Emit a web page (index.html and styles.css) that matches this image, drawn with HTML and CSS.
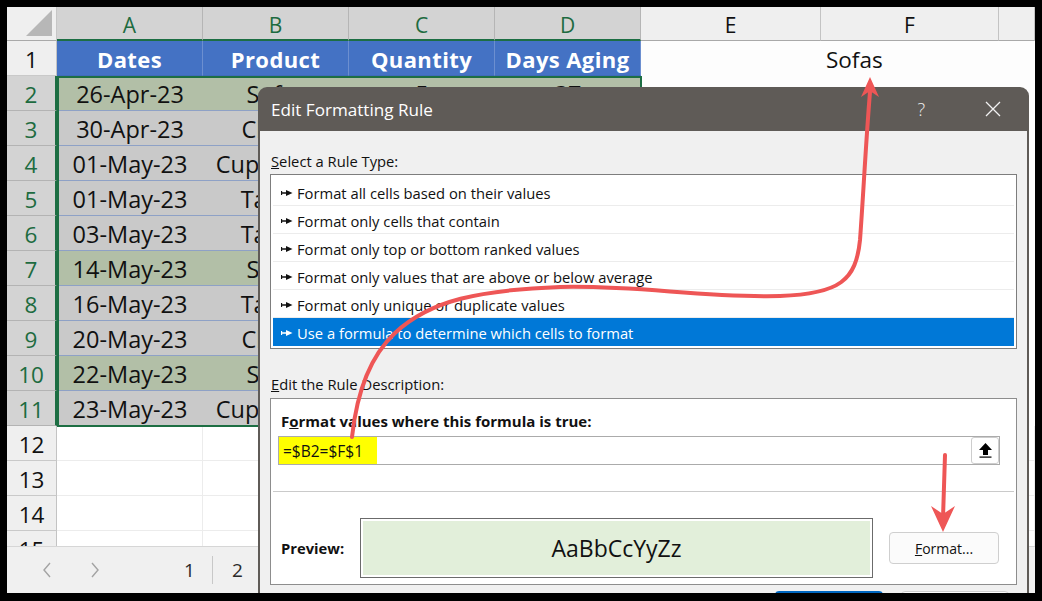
FILE: index.html
```html
<!DOCTYPE html>
<html lang="en">
<head>
    <meta charset="UTF-8">
    <title>Edit Formatting Rule</title>
    <link rel="stylesheet" href="styles.css">
</head>
<body>

    <div class="frame">
        <!-- Worksheet -->
        <div class="grid">
            <div class="corner"><span class="tri"></span></div>
            <div class="colhdr sel">A</div>
            <div class="colhdr sel">B</div>
            <div class="colhdr sel">C</div>
            <div class="colhdr sel">D</div>
            <div class="colhdr">E</div>
            <div class="colhdr">F</div>
            <div class="colhdr"></div>

            <div class="rowhdr top">1</div>
            <div class="cell head">Dates</div>
            <div class="cell head">Product</div>
            <div class="cell head">Quantity</div>
            <div class="cell head">Days Aging</div>
            <div class="cell blank"></div>
            <div class="cell blank left">Sofas</div>
            <div class="cell blank"></div>

            <div class="rowhdr sel">2</div>
            <div class="cell g">26-Apr-23</div><div class="cell g">Sofas</div><div class="cell g">5</div><div class="cell g">37</div>
            <div class="cell blank"></div><div class="cell blank"></div><div class="cell blank"></div>

            <div class="rowhdr sel">3</div>
            <div class="cell s">30-Apr-23</div><div class="cell s">Chairs</div><div class="cell s">8</div><div class="cell s">33</div>
            <div class="cell blank"></div><div class="cell blank"></div><div class="cell blank"></div>

            <div class="rowhdr sel">4</div>
            <div class="cell s">01-May-23</div><div class="cell s">Cupboards</div><div class="cell s">3</div><div class="cell s">32</div>
            <div class="cell blank"></div><div class="cell blank"></div><div class="cell blank"></div>

            <div class="rowhdr sel">5</div>
            <div class="cell s">01-May-23</div><div class="cell s">Tables</div><div class="cell s">6</div><div class="cell s">32</div>
            <div class="cell blank"></div><div class="cell blank"></div><div class="cell blank"></div>

            <div class="rowhdr sel">6</div>
            <div class="cell s">03-May-23</div><div class="cell s">Tables</div><div class="cell s">4</div><div class="cell s">30</div>
            <div class="cell blank"></div><div class="cell blank"></div><div class="cell blank"></div>

            <div class="rowhdr sel">7</div>
            <div class="cell g">14-May-23</div><div class="cell g">Sofas</div><div class="cell g">2</div><div class="cell g">19</div>
            <div class="cell blank"></div><div class="cell blank"></div><div class="cell blank"></div>

            <div class="rowhdr sel">8</div>
            <div class="cell s">16-May-23</div><div class="cell s">Tables</div><div class="cell s">7</div><div class="cell s">17</div>
            <div class="cell blank"></div><div class="cell blank"></div><div class="cell blank"></div>

            <div class="rowhdr sel">9</div>
            <div class="cell s">20-May-23</div><div class="cell s">Chairs</div><div class="cell s">9</div><div class="cell s">13</div>
            <div class="cell blank"></div><div class="cell blank"></div><div class="cell blank"></div>

            <div class="rowhdr sel">10</div>
            <div class="cell g">22-May-23</div><div class="cell g">Sofas</div><div class="cell g">4</div><div class="cell g">11</div>
            <div class="cell blank"></div><div class="cell blank"></div><div class="cell blank"></div>

            <div class="rowhdr sel">11</div>
            <div class="cell s">23-May-23</div><div class="cell s">Cupboards</div><div class="cell s">5</div><div class="cell s">10</div>
            <div class="cell blank"></div><div class="cell blank"></div><div class="cell blank"></div>

            <div class="rowhdr">12</div>
            <div class="cell e"></div><div class="cell e"></div><div class="cell e"></div><div class="cell e"></div>
            <div class="cell e"></div><div class="cell e"></div><div class="cell e"></div>

            <div class="rowhdr">13</div>
            <div class="cell e"></div><div class="cell e"></div><div class="cell e"></div><div class="cell e"></div>
            <div class="cell e"></div><div class="cell e"></div><div class="cell e"></div>

            <div class="rowhdr">14</div>
            <div class="cell e"></div><div class="cell e"></div><div class="cell e"></div><div class="cell e"></div>
            <div class="cell e"></div><div class="cell e"></div><div class="cell e"></div>

            <div class="rowhdr">15</div>
            <div class="cell e"></div><div class="cell e"></div><div class="cell e"></div><div class="cell e"></div>
            <div class="cell e"></div><div class="cell e"></div><div class="cell e"></div>

            <!-- selected range A2:D11 -->
            <div class="selection"></div>
        </div>

        <!-- Sheet tabs -->
        <div class="tabs">
            <svg class="chev first" width="10" height="16" viewBox="0 0 10 16"><path d="M8 1 L2 8 L8 15" fill="none" stroke="#a3a3a3" stroke-width="1.4"/></svg>
            <svg class="chev" width="10" height="16" viewBox="0 0 10 16"><path d="M2 1 L8 8 L2 15" fill="none" stroke="#a3a3a3" stroke-width="1.4"/></svg>
            <span class="tab first-tab">1</span>
            <span class="tab-div"></span>
            <span class="tab">2</span>
        </div>

        <!-- Edit Formatting Rule dialog -->
        <div class="dialog">
            <div class="dlg-title">
                <span class="dlg-name">Edit Formatting Rule</span>
                <span class="help">?</span>
                <svg class="close-x" width="16" height="16" viewBox="0 0 16 16"><path d="M1 1 L15 15 M15 1 L1 15" stroke="#f2f2f2" stroke-width="1.3"/></svg>
            </div>
            <div class="dlg-body">
                <div class="lbl"><u>S</u>elect a Rule Type:</div>
                <ul class="rules">
                    <li><svg class="pt" width="12" height="6" viewBox="0 0 12 6"><path d="M0.5 1 V5 M0.5 3 H6" stroke="currentColor" stroke-width="1.3"/><path d="M5 0 L11.5 3 L5 6 Z" fill="currentColor"/></svg>Format all cells based on their values</li>
                    <li><svg class="pt" width="12" height="6" viewBox="0 0 12 6"><path d="M0.5 1 V5 M0.5 3 H6" stroke="currentColor" stroke-width="1.3"/><path d="M5 0 L11.5 3 L5 6 Z" fill="currentColor"/></svg>Format only cells that contain</li>
                    <li><svg class="pt" width="12" height="6" viewBox="0 0 12 6"><path d="M0.5 1 V5 M0.5 3 H6" stroke="currentColor" stroke-width="1.3"/><path d="M5 0 L11.5 3 L5 6 Z" fill="currentColor"/></svg>Format only top or bottom ranked values</li>
                    <li><svg class="pt" width="12" height="6" viewBox="0 0 12 6"><path d="M0.5 1 V5 M0.5 3 H6" stroke="currentColor" stroke-width="1.3"/><path d="M5 0 L11.5 3 L5 6 Z" fill="currentColor"/></svg>Format only values that are above or below average</li>
                    <li><svg class="pt" width="12" height="6" viewBox="0 0 12 6"><path d="M0.5 1 V5 M0.5 3 H6" stroke="currentColor" stroke-width="1.3"/><path d="M5 0 L11.5 3 L5 6 Z" fill="currentColor"/></svg>Format only unique or duplicate values</li>
                    <li class="on"><svg class="pt" width="12" height="6" viewBox="0 0 12 6"><path d="M0.5 1 V5 M0.5 3 H6" stroke="currentColor" stroke-width="1.3"/><path d="M5 0 L11.5 3 L5 6 Z" fill="currentColor"/></svg>Use a formula to determine which cells to format</li>
                </ul>

                <div class="lbl lbl-desc"><u>E</u>dit the Rule Description:</div>
                <div class="desc">
                    <div class="desc-h">F<u>o</u>rmat values where this formula is true:</div>
                    <div class="formula">
                        <span class="hl">=$B2=$F$1</span>
                        <button class="collapse">
                            <svg width="13" height="15" viewBox="0 0 13 15"><path d="M6.5 0 L13 7 L9 7 L9 12 L4 12 L4 7 L0 7 Z" fill="#000"/><rect x="0.5" y="13.5" width="12" height="1.2" fill="#000"/></svg>
                        </button>
                    </div>
                    <div class="sep"></div>
                    <div class="preview-row">
                        <span class="pv-lbl">Preview:</span>
                        <div class="preview"><div class="pv-in">AaBbCcYyZz</div></div>
                        <button class="fmt"><u>F</u>ormat...</button>
                    </div>
                </div>
                <div class="btns">
                    <button class="btn ok"></button>
                    <button class="btn"></button>
                </div>
            </div>
        </div>
    </div>

    <!-- red annotation arrows -->
    <svg class="marks" width="1042" height="601" viewBox="0 0 1042 601">
        <path d="M352,437 C356,400 366,360 395,333 C430,300 480,290 560,287 C640,285 700,298 780,296 C840,294 856,280 860,240 C863,200 866,140 870,92" fill="none" stroke="#ee5656" stroke-width="4" stroke-linecap="round"/>
        <polygon points="870,77 861,97 870,91 879,97" fill="#ee5656"/>
        <path d="M945,455 L943,518" fill="none" stroke="#ee5656" stroke-width="4" stroke-linecap="round"/>
        <polygon points="943,532 931,506 943,514 955,506" fill="#ee5656"/>
    </svg>

</body>
</html>
```

FILE: styles.css
```css
* {
    box-sizing: border-box;
}
body {
    margin: 0;
    background: #000;
    padding: 7px 7px 8px 7px;
    font-family: "Open Sans", "Segoe UI", sans-serif;
}
.frame {
    position: relative;
    width: 1028px;
    height: 586px;
    overflow: hidden;
    background: #fff;
    display: flex;
    flex-direction: column;
}

/* worksheet */
.grid {
    position: relative;
    flex: 1;
    overflow: hidden;
    display: grid;
    grid-template-columns: 50px 146px 146px 146px 146px 180px 178px 36px;
    grid-template-rows: 34px;
    grid-auto-rows: 35px;
}
.corner {
    position: relative;
    background: #efefef;
    border-right: 1px solid #c6c6c6;
    border-bottom: 1px solid #a9a9a9;
}
.tri {
    position: absolute;
    right: 4px;
    bottom: 4px;
    width: 0;
    height: 0;
    border-left: 26px solid transparent;
    border-bottom: 26px solid #b7b7b7;
}
.colhdr {
    background: #efefef;
    border-right: 1px solid #c3c3c3;
    border-bottom: 1px solid #a9a9a9;
    font-size: 21px;
    color: #111;
    display: flex;
    align-items: center;
    justify-content: center;
    padding-top: 3px;
}
.colhdr.sel {
    background: #d3d3d3;
    color: #1d6b40;
    border-bottom: 2px solid #1d6e43;
    border-right-color: #b5b5b5;
}
.rowhdr {
    background: #efefef;
    border-right: 1px solid #c3c3c3;
    border-bottom: 1px solid #c9c9c9;
    font-size: 22.5px;
    color: #111;
    display: flex;
    align-items: center;
    justify-content: center;
    padding-top: 3px;
}
.rowhdr.sel {
    background: #d3d3d3;
    color: #1d6b40;
    border-bottom-color: #b3b3b3;
    border-right: 2px solid #1d6e43;
}
.cell {
    font-size: 23.5px;
    color: #111;
    display: flex;
    align-items: center;
    justify-content: center;
    white-space: nowrap;
    overflow: hidden;
    padding-top: 2px;
}
.cell.head {
    background: #4472c4;
    color: #fff;
    font-size: 22px;
    font-weight: 700;
    letter-spacing: 0.4px;
    border-right: 1px solid #6c8fd0;
    border-bottom: 1px solid #3f6bb9;
}
.cell.s {
    background: #c9c9c9;
    border-bottom: 1px solid #8ea1c6;
}
.cell.g {
    background: #b2bfa7;
    border-bottom: 1px solid #8ea1c6;
}
.cell.blank {
    background: #fdfdfd;
}
.cell.left {
    justify-content: flex-start;
    padding-left: 5px;
    font-size: 22.5px;
}
.cell.e {
    background: #fff;
    border-right: 1px solid #ececec;
    border-bottom: 1px solid #ececec;
}
.selection {
    position: absolute;
    left: 50px;
    top: 69px;
    width: 585px;
    height: 351px;
    border: 2px solid #1d6e43;
}

/* sheet tab bar */
.tabs {
    height: 47px;
    flex: none;
    background: #f0f0f0;
    border-top: 1px solid #d6d6d6;
    display: flex;
    align-items: center;
    font-size: 19px;
    color: #2a2a2a;
}
.chev.first {
    margin-left: 35px;
}
.chev {
    margin-right: 38px;
}
.first-tab {
    margin-left: 46px;
}
.tab-div {
    width: 1px;
    height: 28px;
    background: #c8c8c8;
    margin: 0 19px 0 17px;
}

/* dialog */
.dialog {
    position: absolute;
    left: 251px;
    top: 80px;
    width: 771px;
    height: 530px;
    display: flex;
    flex-direction: column;
    font-family: "Open Sans", "Segoe UI", sans-serif;
    font-size: 14.75px;
    color: #111;
}
.dlg-title {
    height: 44px;
    flex: none;
    background: #5f5b57;
    border-radius: 9px 9px 0 0;
    color: #fff;
    display: flex;
    align-items: center;
    padding-left: 13px;
}
.dlg-name {
    font-size: 17.1px;
    flex: 1;
}
.help {
    font-size: 18px;
    font-weight: 300;
    color: #eee;
    margin-right: 60px;
}
.close-x {
    margin-right: 28px;
}
.dlg-body {
    flex: 1;
    background: #f0f0f0;
    border-left: 2px solid #5f5b57;
    border-right: 2px solid #5f5b57;
    padding: 19px 10px 0 10px;
}
.lbl {
    height: 20px;
    line-height: 20px;
    padding-left: 1px;
    padding-top: 1px;
}
.rules {
    list-style: none;
    margin: 4px 0 0 0;
    padding: 3px 2px 2px 2px;
    background: #fff;
    border: 1px solid #7d7d7d;
}
.rules li {
    height: 28px;
    display: flex;
    align-items: center;
    padding-left: 8px;
    padding-top: 2px;
    border-bottom: 1px solid #ececec;
    white-space: nowrap;
}
.rules li:last-child {
    border-bottom: none;
}
.rules .pt {
    margin-right: 4px;
    flex: none;
}
.rules li.on {
    background: #0078d7;
    color: #fff;
}
.lbl-desc {
    margin-top: 24px;
}
.desc {
    margin-top: 5px;
    background: #fff;
    border: 1px solid #8d8d8d;
    padding: 12px 16px 6px 7px;
}
.desc-h {
    font-weight: 700;
    font-size: 15px;
    height: 20px;
    line-height: 20px;
    padding-left: 3px;
}
.formula {
    margin-top: 5px;
    height: 29px;
    border: 1px solid #ababab;
    display: flex;
    align-items: stretch;
}
.hl {
    background: #ffff00;
    width: 98px;
    font-size: 15.5px;
    padding-left: 4px;
    padding-top: 1px;
    display: flex;
    align-items: center;
}
.collapse {
    margin-left: auto;
    width: 28px;
    padding: 0;
    background: #fff;
    border: 1px solid #cdcdcd;
    border-radius: 3px;
    display: flex;
    align-items: center;
    justify-content: center;
}
.sep {
    height: 1px;
    background: #cacaca;
    margin: 26px -14px 0 -5px;
}
.preview-row {
    margin-top: 26px;
    display: flex;
    align-items: center;
    padding-left: 3px;
}
.pv-lbl {
    font-weight: 700;
    width: 79px;
}
.preview {
    width: 513px;
    height: 60px;
    border: 1px solid #6b6b6b;
    padding: 2px;
}
.pv-in {
    height: 100%;
    background: #e2efda;
    font-size: 23px;
    display: flex;
    align-items: center;
    justify-content: center;
}
.fmt {
    margin-left: 16px;
    width: 110px;
    height: 32px;
    background: #fbfbfb;
    border: 1px solid #cfcfcf;
    border-radius: 4px;
    font-family: inherit;
    font-size: 14px;
    color: #111;
}
.btns {
    display: flex;
    margin-top: 6px;
    padding-left: 505px;
    gap: 18px;
}
.btn {
    width: 108px;
    height: 30px;
    background: #fdfdfd;
    border: 1px solid #cfcfcf;
    border-radius: 4px;
}
.btn.ok {
    border: 2px solid #0067c0;
}

/* annotations */
.marks {
    position: absolute;
    left: 0;
    top: 0;
    pointer-events: none;
}
```
